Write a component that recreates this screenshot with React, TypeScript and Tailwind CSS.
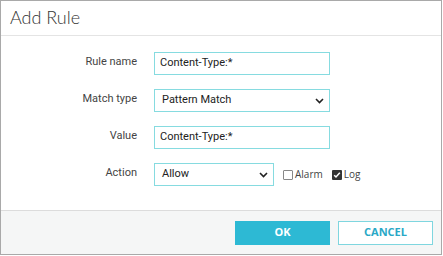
import React from "react";

const Chevron = () => (
  <svg width="9" height="6" viewBox="0 0 9 6" className="shrink-0">
    <path d="M1 1l3.5 3.5L8 1" fill="none" stroke="#222" strokeWidth="1.6" />
  </svg>
);

const Row = ({ label, children }: { label: string; children: React.ReactNode }) => (
  <div className="flex items-center h-[23px]">
    <div className="w-[136px] text-right text-[11px] text-[#444] font-['Roboto',sans-serif] -mt-[3px]">{label}</div>
    <div className="ml-[17px] flex items-center">{children}</div>
  </div>
);

const TextBox = ({ value }: { value: string }) => (
  <div className="w-[176px] h-[23px] border border-[#86dbe0] bg-white flex items-center px-[5px] text-[11px] text-[#222] font-['Roboto',sans-serif]">
    {value}
  </div>
);

const SelectBox = ({ value, width }: { value: string; width: string }) => (
  <div className={`${width} h-[23px] border border-[#86dbe0] bg-white flex items-center justify-between pl-[7px] pr-[5px] text-[11px] text-[#222] font-['Roboto',sans-serif]`}>
    <span>{value}</span>
    <Chevron />
  </div>
);

export default function App() {
  return (
    <div className="w-[442px] h-[255px] border border-[#a9a9a9] bg-white flex flex-col">
      <div className="h-[35px] border-b border-[#e4e4e4] flex items-center pl-[9px]">
        <h2 className="text-[18px] font-light text-[#333] font-['Lato',sans-serif] -mt-[2px]">Add Rule</h2>
      </div>
      <div className="flex-1 flex flex-col gap-[14px] pt-[16px]">
        <Row label="Rule name">
          <TextBox value="Content-Type:*" />
        </Row>
        <Row label="Match type">
          <SelectBox value="Pattern Match" width="w-[176px]" />
        </Row>
        <Row label="Value">
          <TextBox value="Content-Type:*" />
        </Row>
        <Row label="Action">
          <SelectBox value="Allow" width="w-[120px]" />
          <div className="flex items-center ml-[9px] text-[10px] text-[#444] font-['Open_Sans',sans-serif]">
            <span className="w-[10px] h-[10px] border border-[#888] bg-white rounded-[1px]" />
            <span className="ml-[2px]">Alarm</span>
            <span className="ml-[9px] w-[10px] h-[10px] bg-[#333] rounded-[1px] flex items-center justify-center">
              <svg width="8" height="8" viewBox="0 0 8 8">
                <path d="M1.2 4.2l1.8 1.8L6.8 1.8" fill="none" stroke="#fff" strokeWidth="1.5" />
              </svg>
            </span>
            <span className="ml-[2px]">Log</span>
          </div>
        </Row>
      </div>
      <div className="h-[44px] border-t border-[#dcdcdc] bg-[#f5f6f6] flex items-center justify-end pr-[8px] gap-[8px]">
        <button className="w-[95px] h-[24px] bg-[#2db9d4] text-white text-[11px] font-bold font-['Open_Sans',sans-serif]">
          OK
        </button>
        <button className="w-[95px] h-[24px] bg-white border border-[#7fd6df] text-[#2aa8c6] text-[11px] font-bold font-['Open_Sans',sans-serif]">
          CANCEL
        </button>
      </div>
    </div>
  );
}
